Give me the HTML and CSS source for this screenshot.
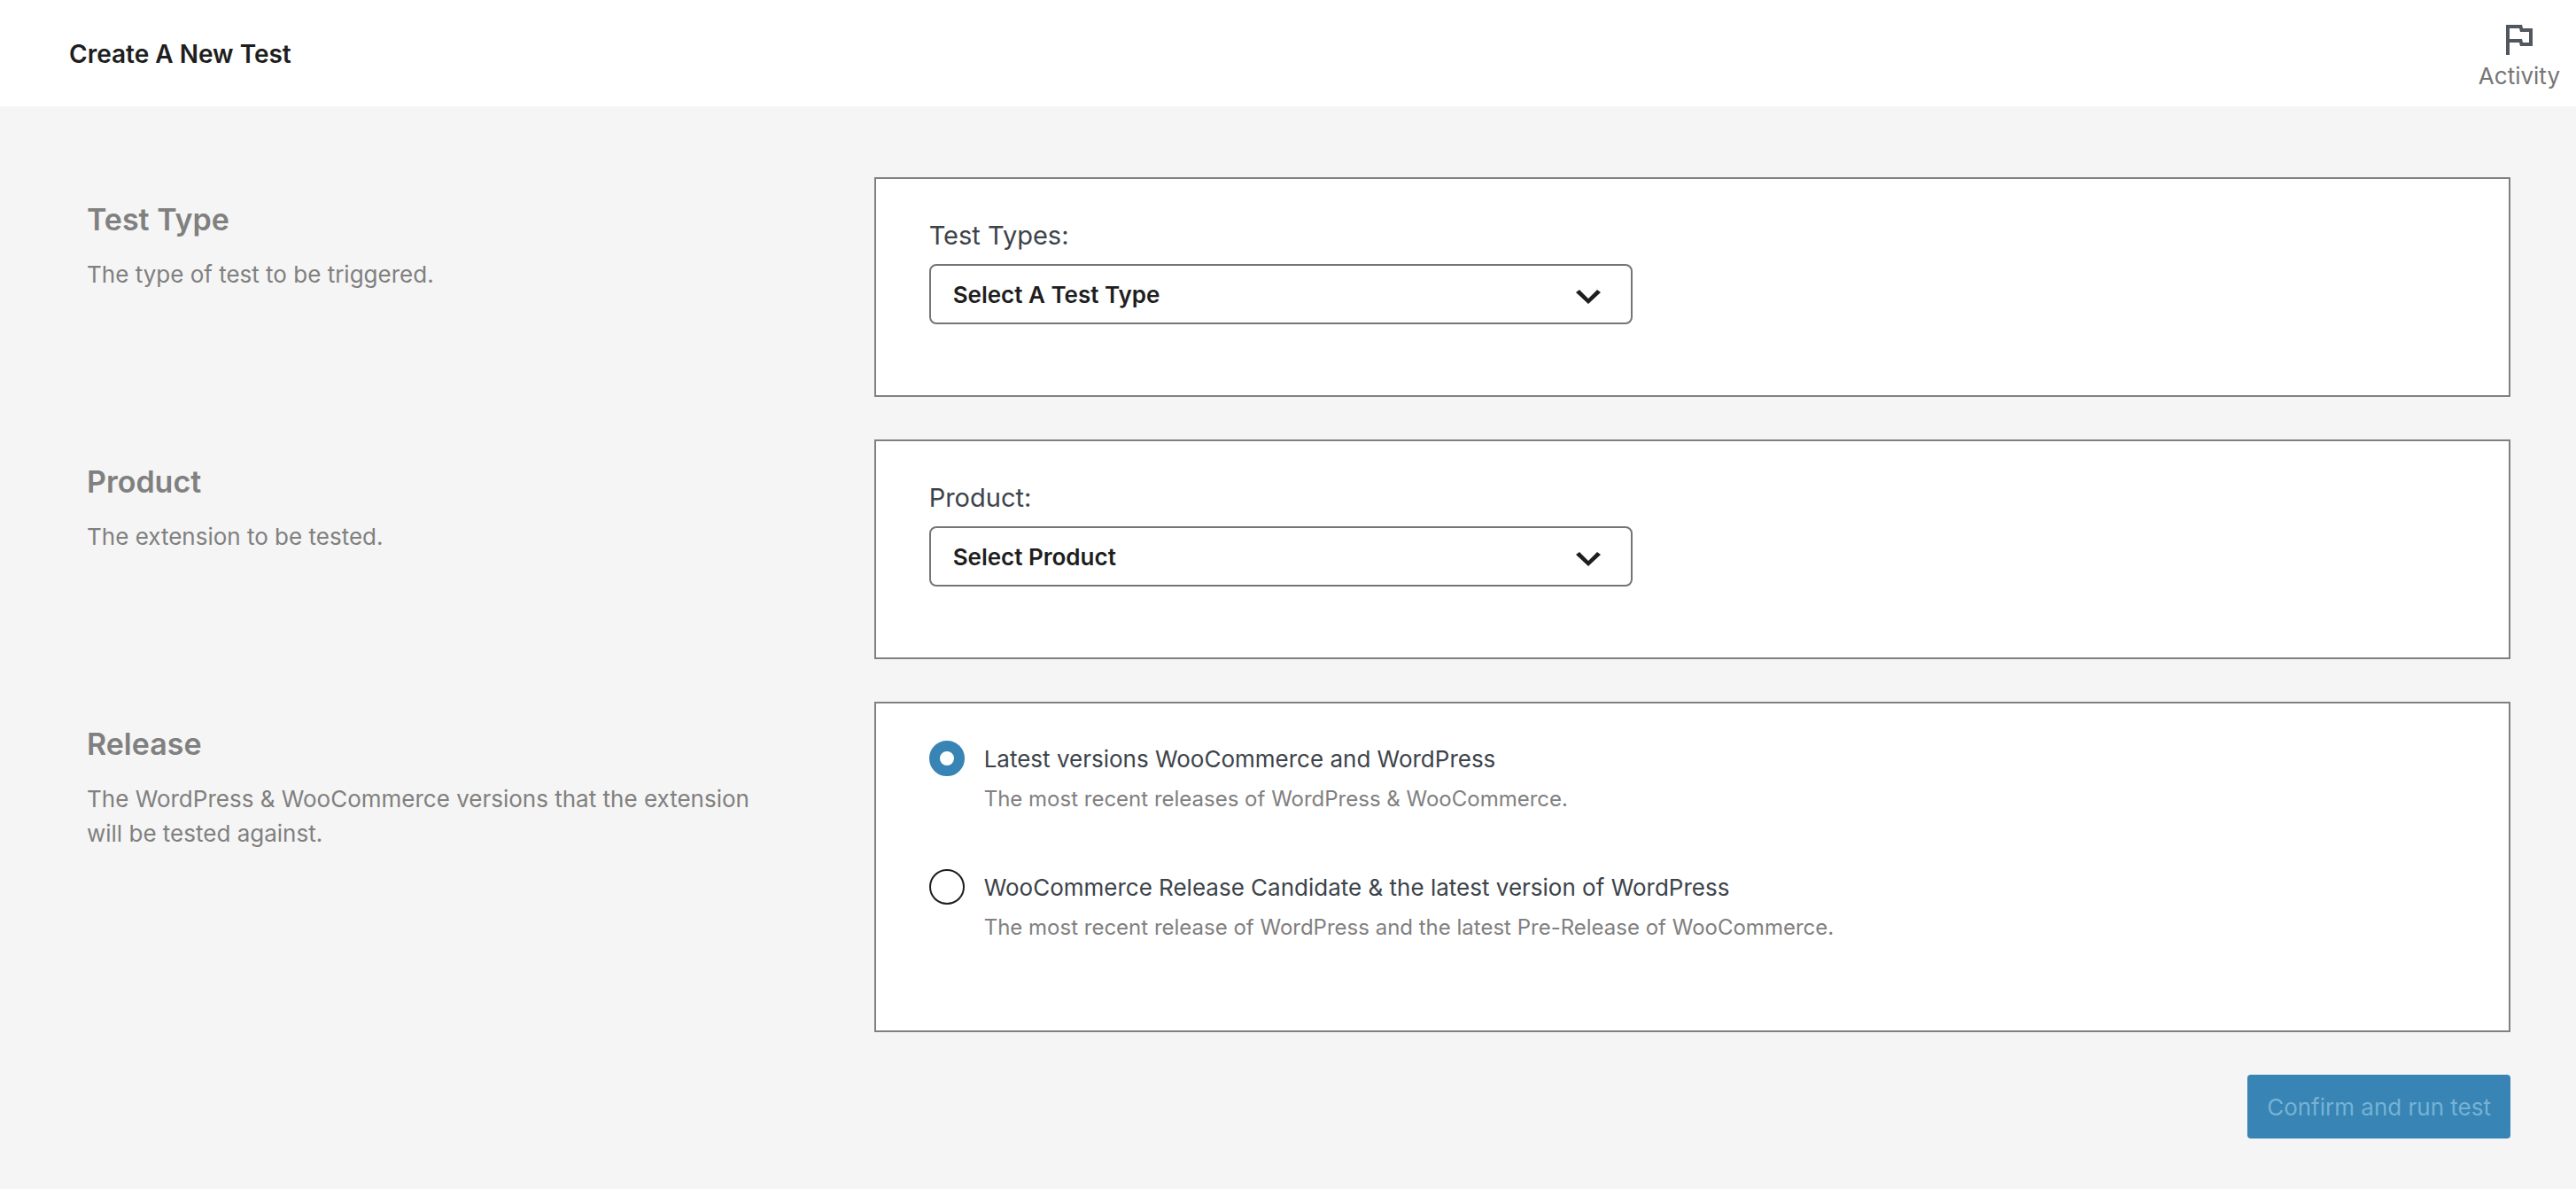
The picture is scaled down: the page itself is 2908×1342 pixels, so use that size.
FILE: index.html
```html
<!DOCTYPE html>
<html lang="en">
<head>
<meta charset="utf-8">
<meta name="viewport" content="width=device-width, initial-scale=1">
<title>Create A New Test</title>
<link rel="stylesheet" href="styles.css">
</head>
<body>
<header class="topbar">
  <h1 class="topbar-title">Create A New Test</h1>
  <button class="activity" type="button">
    <svg class="activity-icon" viewBox="0 0 30 34" aria-hidden="true"><path fill-rule="evenodd" d="M0 0H18L19 4H30V24H16L15 20H4V34H0ZM4 4H15L16 8H26V20H19L18 16H4Z"/></svg>
    <span>Activity</span>
  </button>
</header>
<main>
  <form class="form">
    <section class="row">
      <div class="intro">
        <h2 class="intro-title">Test Type</h2>
        <p class="intro-text">The type of test to be triggered.</p>
      </div>
      <div class="card">
        <label class="field-label" for="test-type">Test Types:</label>
        <div class="select-wrap">
          <select class="select" id="test-type"><option>Select A Test Type</option></select>
          <svg class="chevron" viewBox="0 0 28 22" aria-hidden="true"><path d="M0 9L4 6L14 16L24 6L28 9L14 22Z"/></svg>
        </div>
      </div>
    </section>
    <section class="row">
      <div class="intro">
        <h2 class="intro-title">Product</h2>
        <p class="intro-text">The extension to be tested.</p>
      </div>
      <div class="card">
        <label class="field-label" for="product">Product:</label>
        <div class="select-wrap">
          <select class="select" id="product"><option>Select Product</option></select>
          <svg class="chevron" viewBox="0 0 28 22" aria-hidden="true"><path d="M0 9L4 6L14 16L24 6L28 9L14 22Z"/></svg>
        </div>
      </div>
    </section>
    <section class="row">
      <div class="intro">
        <h2 class="intro-title">Release</h2>
        <p class="intro-text">The WordPress &amp; WooCommerce versions that the extension will be tested against.</p>
      </div>
      <div class="card card-options">
        <div class="option">
          <input class="radio" type="radio" name="release" id="release-latest" aria-describedby="release-latest-help" checked>
          <label class="option-label" for="release-latest">Latest versions WooCommerce and WordPress</label>
          <p class="option-help" id="release-latest-help">The most recent releases of WordPress &amp; WooCommerce.</p>
        </div>
        <div class="option">
          <input class="radio" type="radio" name="release" id="release-rc" aria-describedby="release-rc-help">
          <label class="option-label" for="release-rc">WooCommerce Release Candidate &amp; the latest version of WordPress</label>
          <p class="option-help" id="release-rc-help">The most recent release of WordPress and the latest Pre-Release of WooCommerce.</p>
        </div>
      </div>
    </section>
    <button class="submit" type="submit" disabled>Confirm and run test</button>
  </form>
</main>
</body>
</html>
```
FILE: styles.css
```css
* {
  box-sizing: border-box;
}

body {
  margin: 0;
  background: #f5f5f5;
  color: #3c434a;
  font-family: Inter, "Liberation Sans", sans-serif;
  font-size: 26px;
  line-height: 39px;
}

h1,
h2,
p {
  margin: 0;
}

.topbar {
  display: flex;
  align-items: center;
  justify-content: space-between;
  height: 120px;
  padding: 2px 18px 0 78px;
  background: #fff;
}

.topbar-title {
  color: #1e1e1e;
  font-size: 28px;
  font-weight: 600;
}

.activity {
  display: flex;
  flex-direction: column;
  align-items: center;
  gap: 4px;
  padding: 10px 0 0;
  border: 0;
  background: none;
  color: #757575;
  font: inherit;
}

.activity-icon {
  width: 30px;
  height: 34px;
  fill: #50575e;
}

.form {
  display: flex;
  flex-direction: column;
  gap: 48px;
  padding: 80px 74px 56px 63px;
}

.row {
  display: grid;
  grid-template-columns: 1fr 2fr;
}

.intro {
  padding: 24px 120px 0 35px;
  color: #808080;
}

.intro-title {
  margin-bottom: 18px;
  font-size: 34px;
  font-weight: 600;
  line-height: 48px;
}

.card {
  padding: 44px 60px 80px;
  border: 2px solid #808080;
  background: #fff;
}

.field-label {
  display: block;
  margin-bottom: 12px;
  font-size: 29px;
  line-height: 40px;
}

.select-wrap {
  display: grid;
  align-items: center;
  max-width: 794px;
}

.select {
  grid-area: 1 / 1;
  width: 100%;
  height: 68px;
  padding: 0 72px 0 25px;
  border: 2px solid #757575;
  border-radius: 8px;
  appearance: none;
  background: #fff;
  color: #1e1e1e;
  font: inherit;
  font-weight: 600;
}

.chevron {
  grid-area: 1 / 1;
  justify-self: end;
  width: 28px;
  height: 22px;
  margin-right: 36px;
  fill: #1e1e1e;
  pointer-events: none;
}

.card-options {
  display: flex;
  flex-direction: column;
  gap: 60px;
  padding: 42px 60px 97px;
}

.option {
  display: grid;
  grid-template-columns: 40px 1fr;
  align-items: center;
  column-gap: 22px;
  row-gap: 6px;
}

.radio {
  width: 40px;
  height: 40px;
  margin: 0;
  border: 2px solid #1e1e1e;
  border-radius: 50%;
  appearance: none;
  background: #fff;
}

.radio:checked {
  border: 12px solid #3784b5;
}

.option-help {
  grid-column: 2;
  color: #808080;
  font-size: 24px;
}

.submit {
  align-self: flex-end;
  height: 72px;
  padding: 0 22px;
  border: 0;
  border-radius: 4px;
  background: #3784b5;
  color: #76b2d4;
  font: inherit;
}
```
